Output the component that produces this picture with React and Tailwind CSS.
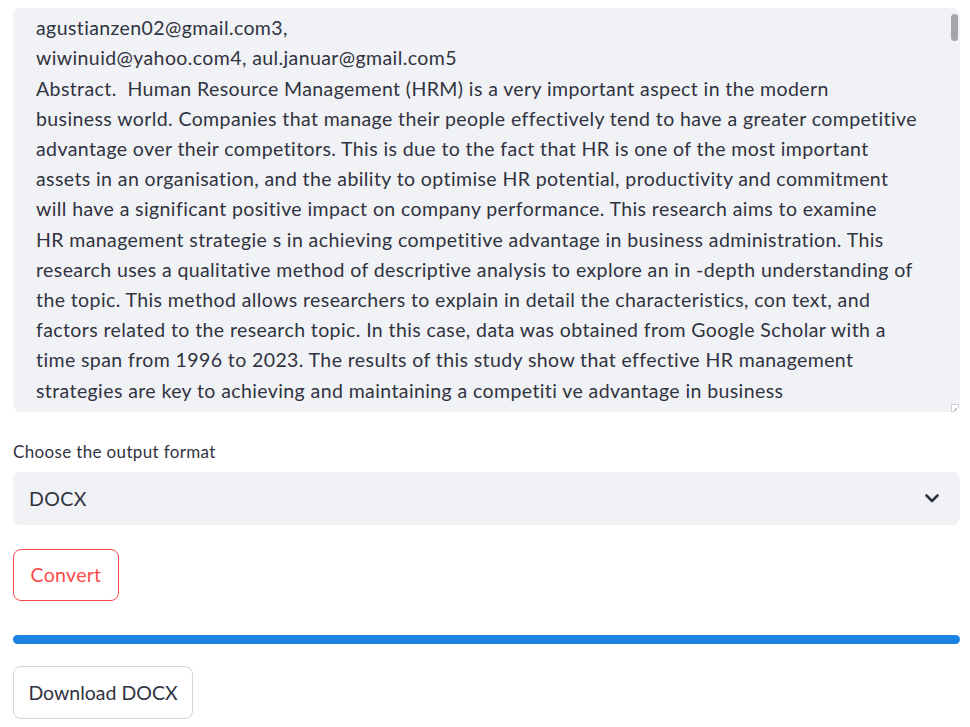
import { useState } from 'react';

const lines = [
  'Universitas Pamulang, Indonesia  (rinawati@gmail.com1, ahmadjunaedi@gmail.com2,',
  'agustianzen02@gmail.com3,',
  'wiwinuid@yahoo.com4, aul.januar@gmail.com5',
  'Abstract.  Human Resource Management (HRM) is a very important aspect in the modern',
  'business world. Companies that manage their people effectively tend to have a greater competitive',
  'advantage over their competitors. This is due to the fact that HR is one of the most important',
  'assets in an organisation, and the ability to optimise HR potential, productivity and commitment',
  'will have a significant positive impact on company performance. This research aims to examine',
  'HR management strategie s in achieving competitive advantage in business administration. This',
  'research uses a qualitative method of descriptive analysis to explore an in -depth understanding of',
  'the topic. This method allows researchers to explain in detail the characteristics, con text, and',
  'factors related to the research topic. In this case, data was obtained from Google Scholar with a',
  'time span from 1996 to 2023. The results of this study show that effective HR management',
  'strategies are key to achieving and maintaining a competiti ve advantage in business',
  'administration. Therefore, it is important for companies to develop and implement the right HR',
];

function App() {
  const [format] = useState('DOCX');

  return (
    <div
      className="w-[970px] h-[727px] bg-white pl-[13px] pr-[10px] overflow-hidden text-[#31333f]"
      style={{ fontFamily: 'Lato, "Noto Sans", sans-serif' }}
    >
      {/* text area (scrolled) */}
      <div className="relative mt-[8px] h-[404px] rounded-lg bg-[#f0f2f6] overflow-hidden">
        <div className="mt-[-25px] pl-[23px] text-[19.5px] leading-[30.2px] tracking-[0.4px]">
          {lines.map((l, i) => (
            <div key={i} className="whitespace-pre">{l}</div>
          ))}
        </div>
        <div className="absolute right-[2px] top-[6px] w-[7px] h-[27px] rounded-full bg-[#a4a4ab]" />
        <div className="absolute right-[1px] bottom-0 w-[8px] h-[8px] bg-white border border-[#d0d0d4] flex items-end justify-end">
          <div className="w-[3px] h-[1px] bg-[#888] rotate-[-45deg] mb-[1px] mr-[1px]" />
        </div>
      </div>

      <div className="mt-[28px] text-[17px] leading-[24px] tracking-[0.35px]">Choose the output format</div>

      <div className="mt-[8px] h-[53px] rounded-lg bg-[#f0f2f6] flex items-center justify-between pl-[16px] pr-[21px]">
        <span className="text-[19.5px] tracking-[0.4px]">{format}</span>
        <svg width="14" height="9" viewBox="0 0 14 9" fill="none">
          <path d="M1.5 1.5 L7 7 L12.5 1.5" stroke="#31333f" strokeWidth="2.6" strokeLinecap="round" strokeLinejoin="round" />
        </svg>
      </div>

      <button className="mt-[24px] h-[52px] w-[106px] rounded-lg border border-[#ff4b4b] text-[#ff4b4b] text-[19.5px] tracking-[0.3px] flex items-center justify-center bg-white">
        Convert
      </button>

      <div className="mt-[34px] h-[9px] rounded-full bg-[#1c83e1]" />

      <button className="mt-[22px] h-[53px] w-[180px] rounded-lg border border-[#d5d5d9] text-[19.5px] flex items-center justify-center bg-white">
        Download DOCX
      </button>
    </div>
  );
}

export default App;
